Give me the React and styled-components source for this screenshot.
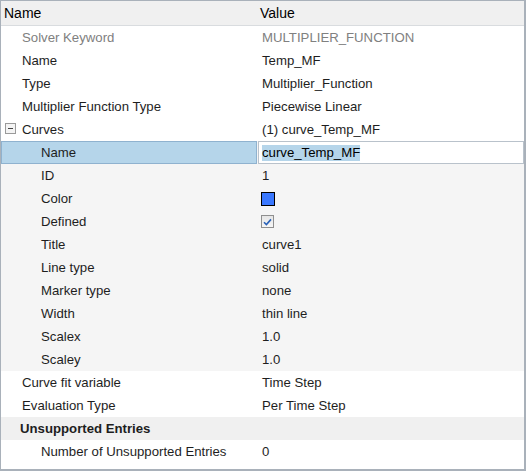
import React from "react";
import styled, { createGlobalStyle } from "styled-components";

const GlobalStyle = createGlobalStyle`
  html, body {
    margin: 0;
    padding: 0;
    background: #ffffff;
  }
  body {
    font-family: "Liberation Sans", Arial, sans-serif;
  }
`;

const rows = [
  { label: "Solver Keyword", value: "MULTIPLIER_FUNCTION", muted: true },
  { label: "Name", value: "Temp_MF" },
  { label: "Type", value: "Multiplier_Function" },
  { label: "Multiplier Function Type", value: "Piecewise Linear" },
  { label: "Curves", value: "(1) curve_Temp_MF", group: true },
  { label: "Name", value: "curve_Temp_MF", child: true, selected: true },
  { label: "ID", value: "1", child: true },
  { label: "Color", kind: "color", child: true },
  { label: "Defined", kind: "check", child: true },
  { label: "Title", value: "curve1", child: true },
  { label: "Line type", value: "solid", child: true },
  { label: "Marker type", value: "none", child: true },
  { label: "Width", value: "thin line", child: true },
  { label: "Scalex", value: "1.0", child: true },
  { label: "Scaley", value: "1.0", child: true },
  { label: "Curve fit variable", value: "Time Step" },
  { label: "Evaluation Type", value: "Per Time Step" },
  { label: "Unsupported Entries", section: true },
  { label: "Number of Unsupported Entries", value: "0", child: true, plain: true },
];

export default function App() {
  return (
    <>
      <GlobalStyle />
      <Frame>
        <HeaderRow>
          <HeaderCell>Name</HeaderCell>
          <HeaderCell>Value</HeaderCell>
        </HeaderRow>
        {rows.map((row, i) => (
          <Row
            key={i}
            $tint={row.section ? "#f0f0f0" : row.child && !row.plain ? "#f5f5f5" : "#ffffff"}
          >
            <LabelCell
              $indent={row.section ? 20 : row.child ? 41 : 22}
              $muted={row.muted}
              $bold={row.section}
              $selected={row.selected}
            >
              {row.group && <Toggle />}
              {row.label}
            </LabelCell>
            {row.selected ? (
              <EditCell>
                <Selection>{row.value}</Selection>
              </EditCell>
            ) : (
              <ValueCell $muted={row.muted}>
                {row.kind === "color" && <Swatch />}
                {row.kind === "check" && (
                  <CheckBox>
                    <svg width="9" height="8" viewBox="0 0 9 8">
                      <path
                        d="M1 4.2 L3.4 6.6 L8 1.4"
                        fill="none"
                        stroke="#2a62b8"
                        strokeWidth="1.6"
                      />
                    </svg>
                  </CheckBox>
                )}
                {row.value}
              </ValueCell>
            )}
          </Row>
        ))}
      </Frame>
    </>
  );
}

const Frame = styled.div`
  width: 526px;
  height: 471px;
  box-sizing: border-box;
  border: 1px solid #a9b1ba;
  border-right-width: 2px;
  border-bottom: 2px solid #a9b1ba;
  background: #ffffff;
  overflow: hidden;
`;

const HeaderRow = styled.div`
  display: grid;
  grid-template-columns: 256px 1fr;
  height: 24px;
  background: #f0f0f0;
  border-bottom: 1px solid #d9dcdf;
`;

const HeaderCell = styled.div`
  display: flex;
  align-items: center;
  padding-left: 3px;
  font-size: 14px;
  color: #000000;
`;

const Row = styled.div`
  display: grid;
  grid-template-columns: 256px 1fr;
  height: 23px;
  background: ${(p) => p.$tint};
`;

const LabelCell = styled.div`
  display: flex;
  align-items: center;
  position: relative;
  padding-left: ${(p) => p.$indent - 1}px;
  font-size: 13.2px;
  font-weight: ${(p) => (p.$bold ? 700 : 400)};
  color: ${(p) => (p.$muted ? "#808080" : "#1e1e1e")};
  white-space: nowrap;
  ${(p) =>
    p.$selected &&
    `
    background: #b5d5ea;
    box-shadow: inset 0 0 0 1px #8fb2cf;
  `}
`;

const Toggle = styled.span`
  position: absolute;
  left: 4px;
  top: 5px;
  width: 11px;
  height: 11px;
  box-sizing: border-box;
  border: 1px solid #9a9a9a;
  background: #f4f4f4;

  &::after {
    content: "";
    position: absolute;
    left: 2px;
    top: 4px;
    width: 5px;
    height: 1px;
    background: #444444;
  }
`;

const ValueCell = styled.div`
  display: flex;
  align-items: center;
  padding-left: 5px;
  font-size: 13.2px;
  color: ${(p) => (p.$muted ? "#808080" : "#1e1e1e")};
  white-space: nowrap;
`;

const EditCell = styled.div`
  display: flex;
  align-items: center;
  margin-left: 1px;
  padding-left: 3px;
  background: #ffffff;
  border: 1px solid #b9c2cb;
  font-size: 13.2px;
  color: #000000;
`;

const Selection = styled.span`
  background: #b5d5ea;
  line-height: 16px;
`;

const Swatch = styled.span`
  width: 12px;
  height: 12px;
  margin-left: -1px;
  border: 1px solid #000000;
  background: #3a78ff;
`;

const CheckBox = styled.span`
  display: flex;
  align-items: center;
  justify-content: center;
  width: 11px;
  height: 11px;
  margin-left: -1px;
  border: 1px solid #8f8f8f;
  background: linear-gradient(#e6e6e6, #f6f6f6);
`;
